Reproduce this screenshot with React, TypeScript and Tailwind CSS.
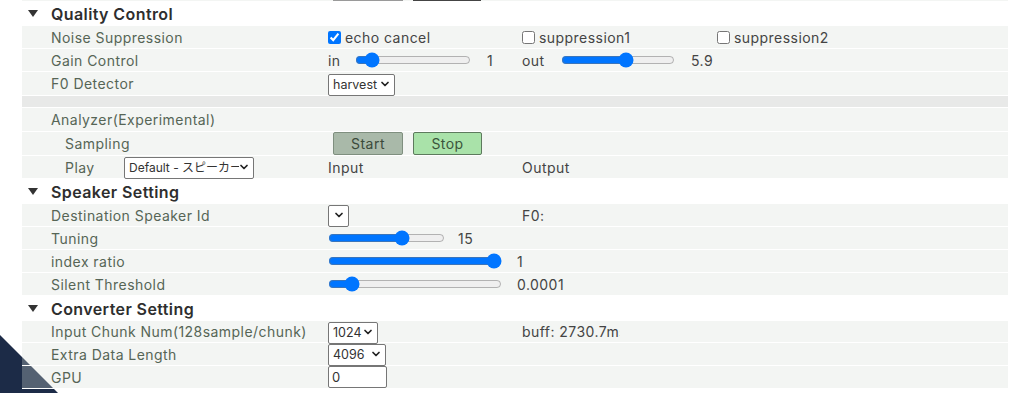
import { ChevronDown } from "lucide-react";

const rowBg = "bg-[rgba(214,222,214,0.3)]";

function Caret() {
  return (
    <svg width="10" height="7" viewBox="0 0 10 7" className="shrink-0">
      <polygon points="0,0 10,0 5,7" fill="#333" />
    </svg>
  );
}

function Header({ title }: { title: string }) {
  return (
    <div className="flex h-[25px] items-center gap-[13px] pl-[28px]">
      <Caret />
      <span className="text-[16px] font-semibold tracking-[0.4px] text-[#2e2e2e]">{title}</span>
    </div>
  );
}

function Row({ h = "h-[23px]", children }: { h?: string; children: React.ReactNode }) {
  return <div className={`ml-[22px] flex w-[986px] items-center border-b border-white ${rowBg} ${h}`}>{children}</div>;
}

function Label({ text }: { text: string }) {
  return <div className="w-[306px] shrink-0 pl-[29px] text-[14px] text-[#566556]">{text}</div>;
}

function Select({ value, w, text = "text-[12.5px]" }: { value: string; w: string; text?: string }) {
  return (
    <div className={`relative h-[22px] shrink-0 ${w}`}>
      <select className={`h-full w-full appearance-none overflow-hidden rounded-[2px] border border-[#767676] bg-white pl-[4px] pr-[14px] tracking-normal text-[#333] ${text}`}>
        <option>{value}</option>
      </select>
      <ChevronDown className="pointer-events-none absolute right-[4px] top-1/2 size-3 -translate-y-1/2 text-[#222]" strokeWidth={3.5} />
    </div>
  );
}

export default function App() {
  return (
    <div className="relative h-[393px] w-[1024px] overflow-hidden bg-white font-['Inter',sans-serif] text-[14px] tracking-[0.45px] text-[#444]">
      <svg className="absolute bottom-0 left-0 z-0" width="60" height="60" viewBox="0 0 60 60">
        <polygon points="0,2 58,60 0,60" fill="#1c2b47" />
      </svg>

      <div className="relative z-10">
        {/* bottoms of the buttons above */}
        <div className={`ml-[22px] flex h-[1px] w-[986px] ${rowBg}`}>
          <div className="ml-[311px] h-[1px] w-[70px] bg-[#9a9a9a]" />
          <div className="ml-[10px] h-[1px] w-[68px] bg-[#444]" />
        </div>

        <Header title="Quality Control" />
        <Row>
          <Label text="Noise Suppression" />
          <label className="flex w-[194px] items-center gap-[4px]">
            <input type="checkbox" defaultChecked className="size-[13px]" />
            <span>echo cancel</span>
          </label>
          <label className="flex w-[195px] items-center gap-[4px]">
            <input type="checkbox" className="size-[13px]" />
            <span>suppression1</span>
          </label>
          <label className="flex items-center gap-[4px]">
            <input type="checkbox" className="size-[13px]" />
            <span>suppression2</span>
          </label>
        </Row>
        <Row>
          <Label text="Gain Control" />
          <div className="flex w-[194px] items-center">
            <span className="w-[27px]">in</span>
            <input type="range" min={0.1} max={10} step={0.1} defaultValue={1} className="w-[116px]" />
            <span className="ml-[16px]">1</span>
          </div>
          <div className="flex items-center">
            <span className="w-[39px]">out</span>
            <input type="range" min={0.1} max={10} step={0.1} defaultValue={5.9} className="w-[114px]" />
            <span className="ml-[16px]">5.9</span>
          </div>
        </Row>
        <Row h="h-[24px]">
          <Label text="F0 Detector" />
          <Select value="harvest" w="w-[67px]" />
        </Row>
        <div className="ml-[22px] h-[12px] w-[986px] border-b border-white bg-[#e8e9e8]" />
        <Row h="h-[24px]">
          <Label text="Analyzer(Experimental)" />
        </Row>
        <Row h="h-[24px]">
          <div className="w-[306px] shrink-0 pl-[43px] text-[14px] text-[#566556]">Sampling</div>
          <button className="ml-[5px] h-[23px] w-[70px] rounded-[2px] border border-[#7f8f7f] bg-[#a9b9a9] text-[#3b4a3b]">Start</button>
          <button className="ml-[10px] h-[23px] w-[69px] rounded-[2px] border border-[#5d7a5d] bg-[#a9e2a9] text-[#3b553b]">Stop</button>
        </Row>
        <Row>
          <div className="flex w-[306px] shrink-0 items-center pl-[43px]">
            <span className="w-[59px] text-[#566556]">Play</span>
            <Select value="Default - スピーカー (Realtek)" w="w-[130px]" text="text-[12px] font-['Inter','Noto_Sans_CJK_JP',sans-serif]" />
          </div>
          <span className="w-[194px]">Input</span>
          <span>Output</span>
        </Row>

        <Header title="Speaker Setting" />
        <Row>
          <Label text="Destination Speaker Id" />
          <div className="w-[194px]">
            <Select value="" w="w-[21px]" />
          </div>
          <span>F0:</span>
        </Row>
        <Row>
          <Label text="Tuning" />
          <input type="range" min={-50} max={50} step={1} defaultValue={15} className="w-[117px]" />
          <span className="ml-[13px]">15</span>
        </Row>
        <Row>
          <Label text="index ratio" />
          <input type="range" min={0} max={1} step={0.1} defaultValue={1} className="w-[174px]" />
          <span className="ml-[15px]">1</span>
        </Row>
        <Row>
          <Label text="Silent Threshold" />
          <input type="range" min={0} max={0.001} step={0.0001} defaultValue={0.0001} className="w-[174px]" />
          <span className="ml-[15px]">0.0001</span>
        </Row>

        <Header title="Converter Setting" />
        <Row h="h-[22px]">
          <Label text="Input Chunk Num(128sample/chunk)" />
          <div className="w-[194px]">
            <Select value="1024" w="w-[50px]" />
          </div>
          <span className="w-[98px] overflow-hidden whitespace-nowrap">buff: 2730.7ms</span>
        </Row>
        <Row>
          <Label text="Extra Data Length" />
          <Select value="4096" w="w-[58px]" />
        </Row>
        <Row>
          <Label text="GPU" />
          <input type="text" defaultValue="0" className="h-[22px] w-[59px] rounded-[2px] border border-[#767676] bg-white px-[3px] text-[13px] text-[#333]" />
        </Row>
      </div>
    </div>
  );
}
